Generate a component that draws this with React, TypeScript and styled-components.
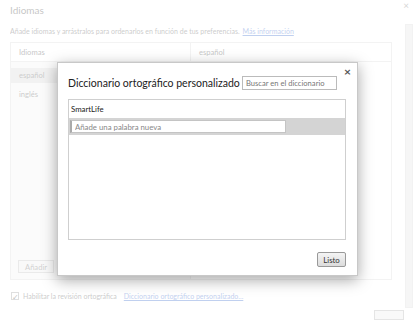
import React from 'react';
import styled, { createGlobalStyle } from 'styled-components';

const GlobalStyle = createGlobalStyle`
  html, body {
    margin: 0;
    padding: 0;
    background: #ffffff;
  }
  * {
    box-sizing: border-box;
  }
`;

export default function App() {
  return (
    <>
      <GlobalStyle />
      <Page>
        <Faded>
          <Content>
            <Header>
              <Title>Idiomas</Title>
            </Header>
            <Desc>
              Añade idiomas y arrástralos para ordenarlos en función de tus preferencias.
              <Link>Más información</Link>
            </Desc>
            <Table>
              <LeftCol>
                <ColHead>Idiomas</ColHead>
                <LangItem $selected>español</LangItem>
                <LangItem>inglés</LangItem>
                <Spacer />
                <AddButton>Añadir</AddButton>
              </LeftCol>
              <RightCol>
                <ColHead>español</ColHead>
              </RightCol>
            </Table>
            <Footer>
              <Check>✓</Check>
              <span>Habilitar la revisión ortográfica</span>
              <Link>Diccionario ortográfico personalizado...</Link>
            </Footer>
            <BottomButton />
          </Content>
          <Side>
            <CloseBack>×</CloseBack>
            <Scrollbar />
          </Side>
        </Faded>

        <Modal>
          <ModalClose>×</ModalClose>
          <ModalHeader>
            <ModalTitle>Diccionario ortográfico personalizado</ModalTitle>
            <Search placeholder="Buscar en el diccionario" />
          </ModalHeader>
          <WordList>
            <Word>SmartLife</Word>
            <NewWordRow>
              <NewWord placeholder="Añade una palabra nueva" />
            </NewWordRow>
          </WordList>
          <ModalFooter>
            <Listo>Listo</Listo>
          </ModalFooter>
        </Modal>
      </Page>
    </>
  );
}

const Page = styled.div`
  position: relative;
  width: 414px;
  height: 322px;
  overflow: hidden;
  background: #ffffff;
  font-family: Lato, 'Open Sans', sans-serif;
  font-size: 7px;
  color: #333;
`;

const Faded = styled.div`
  opacity: 0.3;
  display: flex;
  align-items: flex-start;
`;

const Content = styled.div`
  width: 392px;
  display: flex;
  flex-direction: column;
  padding-left: 10px;
  & > * {
    flex-shrink: 0;
  }
`;

const Side = styled.div`
  width: 22px;
  display: flex;
  flex-direction: column;
  align-items: flex-end;
  padding-right: 1px;
`;

const Header = styled.div`
  height: 26px;
  padding-top: 4px;
`;

const Title = styled.div`
  font-size: 10px;
  color: #444;
`;

const CloseBack = styled.div`
  height: 24px;
  font-size: 10px;
  line-height: 10px;
  color: #777;
  padding-right: 4px;
`;

const Desc = styled.div`
  color: #555;
  height: 16px;
  line-height: 11px;
`;

const Link = styled.span`
  color: #3366cc;
  text-decoration: underline;
  margin-left: 3px;
`;

const Table = styled.div`
  display: flex;
  height: 238px;
  border: 1px solid #d8d8d8;
  font-size: 7.6px;
`;

const LeftCol = styled.div`
  width: 180px;
  display: flex;
  flex-direction: column;
  background: #f2f2f2;
  border-right: 1px solid #d8d8d8;
`;

const RightCol = styled.div`
  flex: 1;
  display: flex;
  flex-direction: column;
`;

const ColHead = styled.div`
  height: 19px;
  line-height: 19px;
  padding-left: 8px;
  border-bottom: 1px solid #d8d8d8;
  background: #fff;
  color: #444;
  margin-bottom: 6px;
`;

const LangItem = styled.div<{ $selected?: boolean }>`
  height: 15px;
  line-height: 15px;
  padding-left: 8px;
  color: #555;
  background: ${(p) => (p.$selected ? '#d6d6d6' : 'transparent')};
  margin-bottom: 4px;
`;

const Spacer = styled.div`
  flex: 1;
`;

const AddButton = styled.div`
  align-self: flex-start;
  margin: 0 0 6px 7px;
  padding: 0 6px;
  height: 13px;
  line-height: 12px;
  border: 1px solid #bbb;
  background: #eee;
  color: #666;
`;

const Scrollbar = styled.div`
  width: 8px;
  height: 284px;
  background: #e2e2e2;
  border: 1px solid #d6d6d6;
`;

const Footer = styled.div`
  display: flex;
  align-items: center;
  gap: 4px;
  height: 16px;
  margin-top: 8px;
  padding-left: 1px;
  color: #555;
`;

const Check = styled.span`
  display: inline-block;
  width: 8px;
  height: 8px;
  line-height: 8px;
  font-size: 8px;
  border: 1px solid #999;
  text-align: center;
  color: #333;
`;

const BottomButton = styled.div`
  align-self: flex-end;
  width: 30px;
  height: 10px;
  margin: 6px -12px 0 0;
  border: 1px solid #aaa;
  background: #eee;
`;

const Modal = styled.div`
  position: absolute;
  left: 57px;
  top: 62px;
  width: 301px;
  height: 214px;
  background: #ffffff;
  border: 1px solid #c8c8c8;
  box-shadow: 0 4px 14px rgba(0, 0, 0, 0.35);
  padding: 12px 11px 8px 10px;
  display: flex;
  flex-direction: column;
`;

const ModalClose = styled.div`
  position: absolute;
  right: 6px;
  top: 1px;
  font-size: 12px;
  font-weight: bold;
  color: #555;
`;

const ModalHeader = styled.div`
  display: flex;
  align-items: center;
  justify-content: space-between;
  height: 16px;
  margin-bottom: 8px;
  padding-right: 9px;
`;

const ModalTitle = styled.div`
  font-size: 10.5px;
  color: #222;
  white-space: nowrap;
`;

const Search = styled.input`
  width: 95px;
  height: 14px;
  border: 1px solid #bbb;
  font-family: inherit;
  font-size: 7.6px;
  padding: 0 3px;
  color: #333;
  outline: none;
  &::placeholder {
    color: #777;
  }
`;

const WordList = styled.div`
  flex: 1;
  border: 1px solid #cfcfcf;
  display: flex;
  flex-direction: column;
`;

const Word = styled.div`
  height: 18px;
  line-height: 18px;
  padding-left: 2px;
  font-size: 7.8px;
  color: #222;
`;

const NewWordRow = styled.div`
  background: #d4d4d4;
  height: 17px;
  padding: 2px 0 2px 1px;
`;

const NewWord = styled.input`
  display: block;
  width: 216px;
  height: 13px;
  border: 1px solid #c4c4c4;
  border-left: 2px solid #aaa;
  background: #fff;
  font-family: inherit;
  font-size: 7.8px;
  padding: 0 3px;
  outline: none;
  &::placeholder {
    color: #888;
  }
`;

const ModalFooter = styled.div`
  display: flex;
  justify-content: flex-end;
  padding-top: 12px;
  height: 27px;
`;

const Listo = styled.button`
  width: 29px;
  height: 15px;
  padding: 0;
  font-family: inherit;
  font-size: 7.8px;
  color: #333;
  border: 1px solid #999;
  border-radius: 2px;
  background: linear-gradient(#f4f4f4, #dcdcdc);
`;
